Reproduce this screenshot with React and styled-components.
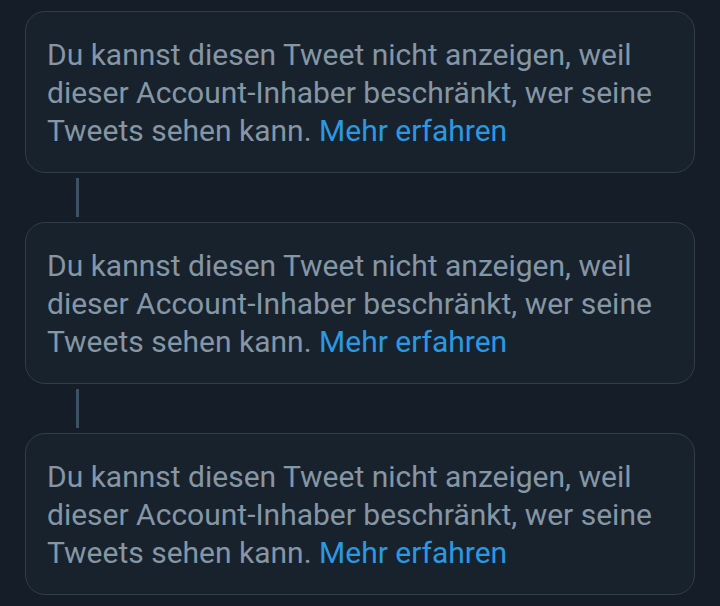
import React from "react";
import styled, { createGlobalStyle } from "styled-components";

const Global = createGlobalStyle`
  html, body { margin: 0; padding: 0; background: #151e28; }
  body { font-family: Roboto, "Noto Sans", sans-serif; }
`;

const Page = styled.div`
  box-sizing: border-box;
  width: 720px;
  height: 606px;
  padding: 11px 25px 0 25px;
  display: flex;
  flex-direction: column;
  background: #151e28;
`;

const Card = styled.div`
  box-sizing: border-box;
  height: 162px;
  border: 1px solid #313d49;
  border-radius: 20px;
  background: #18222d;
  padding: 24px 20px 22px 21px;
`;

const Message = styled.p`
  margin: 0;
  font-size: 30px;
  line-height: 38px;
  color: #8596a5;
`;

const Link = styled.a`
  color: #2b99e2;
  text-decoration: none;
`;

const Connector = styled.div`
  width: 3px;
  height: 39px;
  margin: 5px 0 5px 51px;
  background: #3c5163;
`;

const texts = [0, 1, 2];

export default function App() {
  return (
    <>
      <Global />
      <Page>
        {texts.map((i) => (
          <React.Fragment key={i}>
            {i > 0 && <Connector />}
            <Card>
              <Message>
                Du kannst diesen Tweet nicht anzeigen, weil dieser Account-Inhaber beschränkt, wer seine Tweets sehen kann.{" "}
                <Link href="#">Mehr erfahren</Link>
              </Message>
            </Card>
          </React.Fragment>
        ))}
      </Page>
    </>
  );
}
